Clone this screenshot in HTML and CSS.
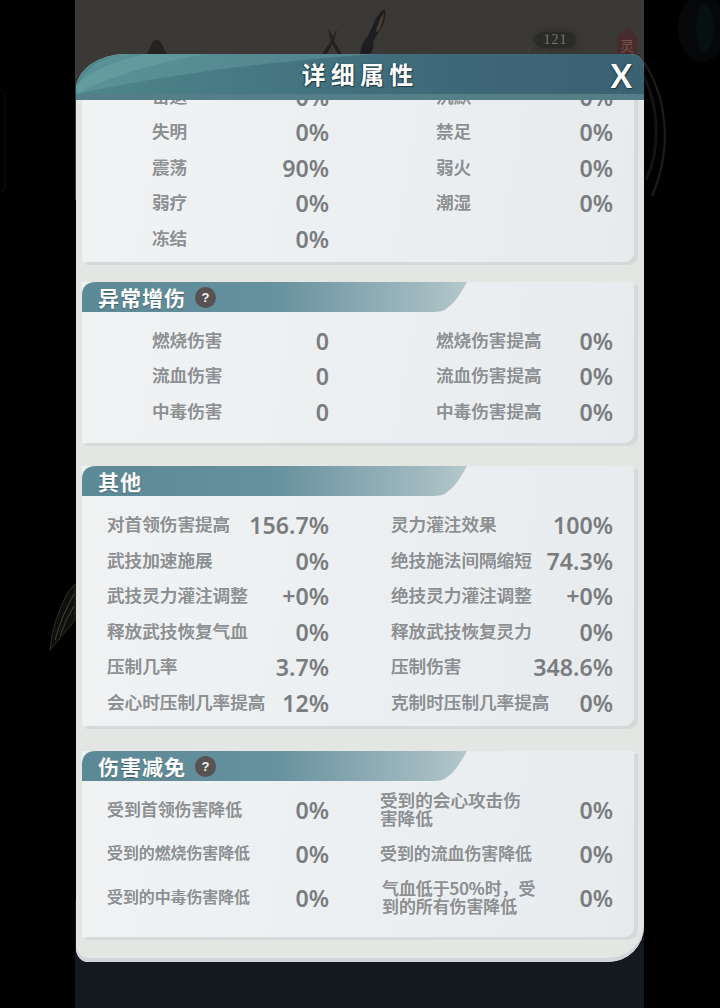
FILE: index.html
```html
<!DOCTYPE html>
<html lang="zh">
<head>
<meta charset="utf-8">
<title>详细属性</title>
<link rel="stylesheet" href="styles.css">
</head>
<body>
<div class="scene">
  <svg class="backdrop" width="720" height="1008" viewBox="0 0 720 1008" aria-hidden="true">
    <rect x="-6" y="90" width="11" height="102" rx="5" fill="none" stroke="#101010"/>
    <ellipse cx="702" cy="28" rx="24" ry="34" fill="#050708"/>
    <ellipse cx="705" cy="28" rx="9" ry="24" fill="#061012"/>
    <path d="M644 62C668 100 672 150 652 196" fill="none" stroke="#1e1f1d" stroke-width="2"/>
    <path d="M644 76C660 110 660 150 646 180" fill="none" stroke="#121312" stroke-width="3"/>
    <path d="M147 54L153 41Q156 38 160 41L167 54Z" fill="#252321"/>
    <path d="M322 54L331 41L328 29L333 37L337 29L334 41L342 54L338 54L332 44L327 54Z" fill="#24201c"/>
    <path d="M360 54Q361 42 368 36L376 18Q381 11 385 9Q386 22 380 30L373 42Q374 50 370 54Z" fill="#1e1e20"/>
    <path d="M376 31Q379 20 384 12Q383 24 378 32Z" fill="#4e3d2c"/>
    <path d="M50 650Q52 622 68 592L75 584V620Q62 636 50 650Z" fill="#100f0c" stroke="#302f27"/>
    <path d="M55 640Q62 615 74 594M60 636Q66 618 74 606" fill="none" stroke="#45433a"/>
    <path d="M617 54V36L627 27L637 36V54Z" fill="#482b2c"/>
    <circle cx="537" cy="53" r="9" fill="none" stroke="#454541"/>
  </svg>
  <div class="level">121</div>
  <div class="seal">灵</div>

  <section class="panel">
    <header class="panel-head">
      <svg class="swoosh" width="568" height="40" viewBox="0 0 568 40" preserveAspectRatio="none" aria-hidden="true">
        <path d="M0 40Q4 10 44 0H300Q130 12 0 40Z" fill="#6ba6a8" opacity=".4"/>
        <path d="M0 40Q50 14 130 0H70Q20 10 0 32Z" fill="#79b3b2" opacity=".3"/>
      </svg>
      <span></span>
      <h1 class="panel-title">详细属性</h1>
      <span class="panel-close">X</span>
    </header>

    <div class="panel-body">
      <div class="card card-first">
        <div class="grid indent">
          <div class="row"><span class="name">击退</span><span class="val">0%</span></div>
          <div class="row"><span class="name">沉默</span><span class="val">0%</span></div>
          <div class="row"><span class="name">失明</span><span class="val">0%</span></div>
          <div class="row"><span class="name">禁足</span><span class="val">0%</span></div>
          <div class="row"><span class="name">震荡</span><span class="val">90%</span></div>
          <div class="row"><span class="name">弱火</span><span class="val">0%</span></div>
          <div class="row"><span class="name">弱疗</span><span class="val">0%</span></div>
          <div class="row"><span class="name">潮湿</span><span class="val">0%</span></div>
          <div class="row"><span class="name">冻结</span><span class="val">0%</span></div>
        </div>
      </div>

      <div class="card card-boost">
        <h2 class="bar"><span>异常增伤</span><i class="help">?</i></h2>
        <div class="grid indent">
          <div class="row"><span class="name">燃烧伤害</span><span class="val">0</span></div>
          <div class="row"><span class="name">燃烧伤害提高</span><span class="val">0%</span></div>
          <div class="row"><span class="name">流血伤害</span><span class="val">0</span></div>
          <div class="row"><span class="name">流血伤害提高</span><span class="val">0%</span></div>
          <div class="row"><span class="name">中毒伤害</span><span class="val">0</span></div>
          <div class="row"><span class="name">中毒伤害提高</span><span class="val">0%</span></div>
        </div>
      </div>

      <div class="card card-other">
        <h2 class="bar"><span>其他</span></h2>
        <div class="grid">
          <div class="row"><span class="name">对首领伤害提高</span><span class="val">156.7%</span></div>
          <div class="row"><span class="name">灵力灌注效果</span><span class="val">100%</span></div>
          <div class="row"><span class="name">武技加速施展</span><span class="val">0%</span></div>
          <div class="row"><span class="name">绝技施法间隔缩短</span><span class="val">74.3%</span></div>
          <div class="row"><span class="name">武技灵力灌注调整</span><span class="val">+0%</span></div>
          <div class="row"><span class="name">绝技灵力灌注调整</span><span class="val">+0%</span></div>
          <div class="row"><span class="name">释放武技恢复气血</span><span class="val">0%</span></div>
          <div class="row"><span class="name">释放武技恢复灵力</span><span class="val">0%</span></div>
          <div class="row"><span class="name">压制几率</span><span class="val">3.7%</span></div>
          <div class="row"><span class="name">压制伤害</span><span class="val">348.6%</span></div>
          <div class="row"><span class="name">会心时压制几率提高</span><span class="val">12%</span></div>
          <div class="row"><span class="name">克制时压制几率提高</span><span class="val">0%</span></div>
        </div>
      </div>

      <div class="card card-reduce">
        <h2 class="bar"><span>伤害减免</span><i class="help">?</i></h2>
        <div class="grid tall">
          <div class="row"><span class="name small">受到首领伤害降低</span><span class="val">0%</span></div>
          <div class="row shift"><span class="name">受到的会心攻击伤<br>害降低</span><span class="val">0%</span></div>
          <div class="row"><span class="name tiny">受到的燃烧伤害降低</span><span class="val">0%</span></div>
          <div class="row shift"><span class="name small">受到的流血伤害降低</span><span class="val">0%</span></div>
          <div class="row"><span class="name tiny">受到的中毒伤害降低</span><span class="val">0%</span></div>
          <div class="row shift"><span class="name small nudge">气血低于50%时，受<br>到的所有伤害降低</span><span class="val">0%</span></div>
        </div>
      </div>
    </div>
  </section>
</div>
</body>
</html>
```
FILE: styles.css
```css
* { box-sizing: border-box; }

html, body {
  margin: 0;
  height: 100%;
  background: #000;
  overflow: hidden;
  font-family: "Noto Sans CJK SC", "Noto Sans", sans-serif;
}

.scene {
  position: relative;
  width: 720px;
  height: 1008px;
  padding: 54px 76px 0 76px;
  background:
    linear-gradient(#3a3936, #3a3936) 75px 0 / 569px 200px no-repeat,
    linear-gradient(#14181f, #14181f) 75px 900px / 569px 108px no-repeat,
    #000;
}

.backdrop {
  position: absolute;
  left: 0;
  top: 0;
}

.level {
  position: absolute;
  left: 535px;
  top: 32px;
  width: 41px;
  height: 16px;
  border-radius: 8px;
  background: #2a2a28;
  box-shadow: 0 0 6px #2a2a28;
  color: #76756f;
  font: 14px/16px "Liberation Serif", serif;
  letter-spacing: 1px;
  text-align: center;
}

.seal {
  position: absolute;
  left: 617px;
  top: 36px;
  width: 20px;
  color: #7a5250;
  font-size: 14px;
  line-height: 18px;
  text-align: center;
}

.panel {
  position: relative;
  display: flex;
  flex-direction: column;
  width: 568px;
  height: 908px;
  overflow: hidden;
  background: #e3e6e3;
  border-radius: 50px 14px 36px 12px / 36px 14px 36px 14px;
  box-shadow: inset 0 -4px 0 #d3d4d8;
}

.panel-head {
  position: relative;
  flex: none;
  display: grid;
  grid-template-columns: 1fr auto 1fr;
  align-items: center;
  height: 46px;
  padding: 0 12px 0 0;
  background: linear-gradient(90deg, #4f868c 0, #457682 35%, #3d6676 70%, #3b6272 100%);
  border-bottom: 6px solid #557f88;
}

.swoosh {
  position: absolute;
  left: 0;
  top: 0;
}

.panel-title {
  position: relative;
  margin: 0;
  padding-left: 12px;
  color: #fff;
  font-size: 24px;
  font-weight: 700;
  line-height: 30px;
  letter-spacing: 5.3px;
  text-shadow: 1px 1px 1px #1d3a44, -1px 0 1px #1d3a44;
}

.panel-close {
  position: relative;
  justify-self: end;
  margin-top: 4px;
  color: #fff;
  font: 700 32px/32px "Lato", sans-serif;
  text-shadow: 1px 1px 1px #1d3a44, -1px 0 1px #1d3a44;
}

.panel-body {
  flex: 1;
  min-height: 0;
  overflow: hidden;
  padding: 0 10px 0 6px;
}

.card {
  width: 552px;
  background: linear-gradient(100deg, #f0f2f3 0, #eceff1 55%, #e8ebee 100%);
  border-radius: 0 0 10px 0;
  box-shadow: 4px 3px 0 #d6d9d9;
}

.card-first {
  margin-top: -21px;
  height: 183px;
}

.card-boost {
  height: 161px;
  margin-top: 20px;
}

.card-other {
  height: 260px;
  margin-top: 23px;
}

.card-reduce {
  height: 186px;
  margin-top: 25px;
}

.bar {
  display: flex;
  align-items: center;
  gap: 9px;
  width: 385px;
  height: 30px;
  margin: 0;
  padding-left: 16px;
  background: linear-gradient(90deg, #5c8996 0, #66919e 50%, #a6bdc3 92%, #b5c8cc 100%);
  clip-path: path("M14 0H385C379 11 373 21 364 27Q360 30 352 30H0V14Q0 0 14 0Z");
  color: #fff;
  font-size: 21px;
  font-weight: 700;
  line-height: 30px;
  letter-spacing: 1px;
  text-shadow: 0 1px 1px #3d5f6b;
}

.help {
  display: block;
  width: 21px;
  height: 21px;
  border-radius: 50%;
  background: #575352;
  color: #f2f2f2;
  font: 700 13px/21px "Liberation Sans", sans-serif;
  letter-spacing: 0;
  text-align: center;
  text-shadow: none;
}

.grid {
  display: grid;
  grid-template-columns: 221px 221px;
  grid-auto-rows: 35.5px;
  column-gap: 63px;
  padding-left: 25px;
}

.card-boost .grid { padding-top: 11px; }
.card-other .grid { padding-top: 11.5px; }
.card-reduce .grid { padding-top: 7px; }

.tall { grid-auto-rows: 44px; }

.row {
  display: flex;
  align-items: center;
  justify-content: space-between;
  white-space: nowrap;
}

.shift { margin-left: -11px; }

.indent .name { padding-left: 45px; }

.name {
  color: #8d9093;
  font-size: 17.6px;
  font-weight: 500;
  line-height: 18px;
  margin-top: -2px;
  text-shadow: 0 0 .6px #8d9093;
}

.small { font-size: 16.9px; }
.tiny { font-size: 15.9px; }
.nudge { padding-left: 2px; }

.val {
  margin-right: -1px;
  color: #7a7d80;
  font-family: "Noto Sans", sans-serif;
  font-size: 23.2px;
  font-weight: 600;
  line-height: 30px;
}
```
